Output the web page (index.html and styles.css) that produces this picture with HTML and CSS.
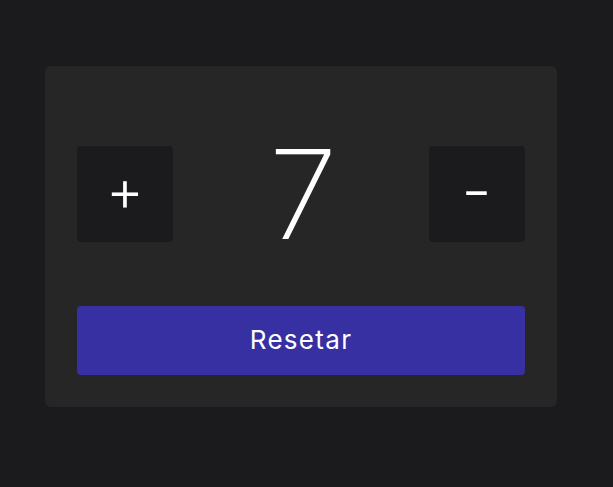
FILE: index.html
```html
<!DOCTYPE html>
<html lang="pt">
<head>
<meta charset="utf-8">
<link rel="stylesheet" href="styles.css">
<title>Contador</title>
</head>
<body>
  <main class="card">
    <div class="counter">
      <button class="step">+</button>
      <span class="value">7</span>
      <button class="step"><span class="minus-glyph">-</span></button>
    </div>
    <button class="reset">Resetar</button>
  </main>
</body>
</html>
```
FILE: styles.css
```css
html, body {
  margin: 0;
  height: 100%;
}
body {
  background: #1b1b1d;
  font-family: Inter, "Noto Sans", sans-serif;
  color: #ffffff;
  box-sizing: border-box;
  padding: 66px 0 0 45px;
}
.card {
  width: 448px;
  padding: 32px;
  background: #262626;
  border-radius: 6px;
}
.counter {
  height: 192px;
  display: flex;
  align-items: center;
  justify-content: space-between;
}
.step {
  width: 96px;
  height: 96px;
  border: none;
  border-radius: 4px;
  background: #1b1b1d;
  color: #ffffff;
  font-family: Inter, sans-serif;
  font-size: 58px;
  font-weight: 300;
  line-height: 1;
  padding: 0 0 8px 0;
  display: flex;
  align-items: center;
  justify-content: center;
}
.minus-glyph {
  display: inline-block;
  font-size: 60px;
  font-weight: 300;
  transform: scaleX(1.12);
}
.value {
  font-family: Inter, sans-serif;
  font-weight: 200;
  font-size: 124px;
  line-height: 1;
  margin-left: 4px;
}
.reset {
  display: block;
  width: 100%;
  height: 69px;
  margin-top: 16px;
  border: none;
  border-radius: 4px;
  background: #3730a3;
  color: #ffffff;
  font-family: Inter, sans-serif;
  font-size: 26px;
  font-weight: 400;
  letter-spacing: 1.3px;
  padding: 0 0 2px 0;
}
```
